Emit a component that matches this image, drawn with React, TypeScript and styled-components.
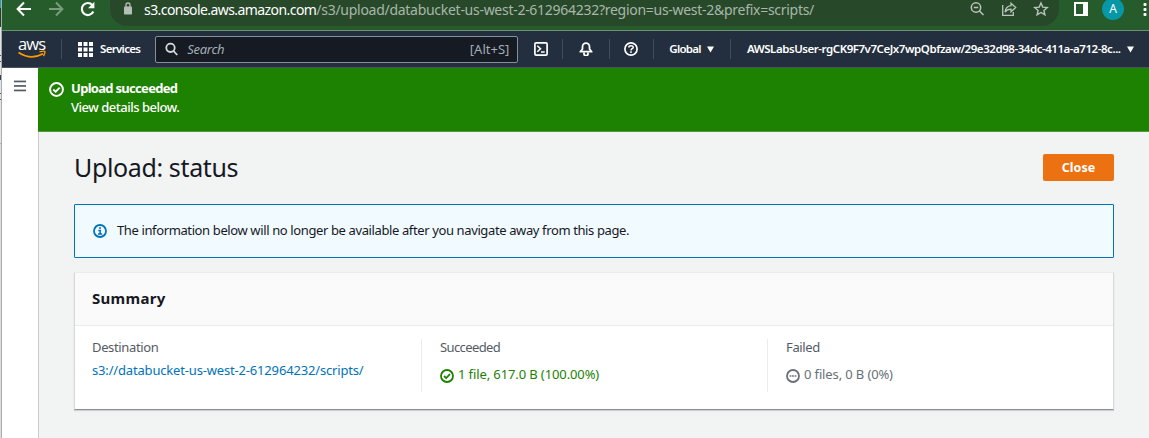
import React from "react";
import styled, { createGlobalStyle } from "styled-components";

const Global = createGlobalStyle`
  *, *::before, *::after { box-sizing: border-box; }
  body { margin: 0; background: #f2f3f3; overflow: hidden; }
  svg { display: block; flex: none; }
`;

const Screen = styled.div`
  display: flex;
  width: 1149px;
  height: 438px;
  overflow: hidden;
  font-family: "Noto Sans", "Open Sans", sans-serif;
  font-size: 13px;
  color: #16191f;
`;

const WindowEdge = styled.div`
  flex: none;
  width: 2px;
  border-right: 1px solid #a9abad;
  background: linear-gradient(
    #1f9fae 0 8px, #20402a 8px 27px, #e3e4e5 27px 55px, #55585c 55px 56px,
    #e3e4e5 56px 61px, #55585c 61px 62px, #e3e4e5 62px 75px, #3c4046 75px 80px,
    #e3e4e5 80px 93px, #55585c 93px 94px, #e3e4e5 94px 99px, #55585c 99px 100px,
    #e3e4e5 100px 143px, #b5b7b9 143px 144px, #dcddde 144px
  );
`;

const Window = styled.div`
  flex: 1;
  display: flex;
  flex-direction: column;
  min-width: 0;
`;

const BrowserBar = styled.div`
  display: flex;
  height: 31px;
  background: #265c2b;
  border-bottom: 1px solid #6d916f;
  color: #fff;
`;

const BrowserButtons = styled.div`
  display: flex;
  flex: none;
  width: 108px;
  padding-left: 14px;
  gap: 14px;
`;

const AddressBar = styled.div`
  display: flex;
  flex: none;
  width: 949px;
  height: 26px;
  padding: 0 10px 0 14px;
  background: #27492a;
  border-radius: 0 0 17px 17px;
`;

const Url = styled.span`
  flex: 1;
  padding-left: 12px;
  font-size: 14px;
  line-height: 19px;
  letter-spacing: -0.28px;
  white-space: nowrap;
  color: #a8b7a9;
`;

const UrlHost = styled.span`
  color: #fff;
  letter-spacing: -0.57px;
`;

const AddressActions = styled.div`
  display: flex;
  gap: 16px;
`;

const BrowserTools = styled.div`
  display: flex;
  flex: 1;
  padding-left: 14px;
`;

const Avatar = styled.div`
  width: 22px;
  height: 22px;
  margin: -2px 19px 0 14px;
  border-radius: 50%;
  background: #0797a7;
  font-size: 12px;
  line-height: 22px;
  text-align: center;
`;

const Nav = styled.nav`
  display: flex;
  align-items: center;
  height: 37px;
  background: #232f3e;
  border-bottom: 1px solid #4a5360;
  color: #fff;
`;

const Logo = styled.div`
  display: flex;
  flex-direction: column;
  width: 42px;
  padding: 0 0 3px 16px;
  font-family: "Open Sans", sans-serif;
  font-size: 16.5px;
  font-weight: 500;
  line-height: 16px;
  letter-spacing: -0.8px;
`;

const Smile = styled.svg`
  margin-top: -2px;
  margin-left: -1px;
`;

const NavDivider = styled.div<{ $before: number; $after: number }>`
  flex: none;
  width: 1px;
  height: 20px;
  margin-left: ${(p) => p.$before}px;
  margin-right: ${(p) => p.$after}px;
  background: #414d5c;
`;

const NavText = styled.span<{ $spacing: number; $gap?: number }>`
  margin-left: ${(p) => p.$gap ?? 0}px;
  margin-right: 6px;
  font-size: 11.5px;
  font-weight: 600;
  line-height: 18px;
  letter-spacing: ${(p) => p.$spacing}px;
  white-space: nowrap;
`;

const SearchBox = styled.div`
  display: flex;
  align-items: center;
  flex: none;
  width: 363px;
  height: 27px;
  margin-left: 9px;
  margin-right: 16px;
  padding: 0 8px 0 9px;
  background: #161a22;
  border: 1px solid #858f99;
  border-radius: 2px;
`;

const SearchHint = styled.span`
  flex: 1;
  padding-left: 9px;
  font-style: italic;
  letter-spacing: -0.3px;
  color: #a3aeb5;
`;

const Shortcut = styled.span`
  font-size: 13px;
  color: #a3aeb5;
`;

const Body = styled.div`
  display: flex;
  flex: 1;
`;

const SideRail = styled.aside`
  flex: none;
  width: 37px;
  padding: 12px 0 0 12px;
  background: #fff;
`;

const Main = styled.main`
  flex: 1;
  margin-left: -1px;
  background: #f2f3f3;
  border-left: 1px solid #c9cdcf;
`;

const Flash = styled.div`
  display: flex;
  height: 64px;
  margin-left: -1px;
  padding: 14px 11px;
  gap: 7px;
  background: #1d8102;
  border-bottom: 1px solid #4f9a3c;
  color: #fff;
`;

const FlashText = styled.div<{ $bold?: boolean; $spacing: number }>`
  font-size: 13px;
  font-weight: ${(p) => (p.$bold ? 700 : 500)};
  line-height: 19px;
  letter-spacing: ${(p) => p.$spacing}px;
  margin-top: ${(p) => (p.$bold ? -3 : 0)}px;
`;

const Content = styled.div`
  padding: 21px 35px 0;
`;

const TitleRow = styled.div`
  display: flex;
  align-items: flex-start;
  justify-content: space-between;
  height: 51px;
`;

const Title = styled.h1`
  margin: -4px 0 0;
  font-size: 25px;
  font-weight: 400;
  line-height: 36px;
  letter-spacing: -0.37px;
`;

const CloseButton = styled.button`
  width: 71px;
  height: 27px;
  margin-top: 1px;
  padding: 0;
  border: 0;
  border-radius: 2px;
  background: #ec7211;
  color: #fff;
  font-family: inherit;
  font-size: 12.5px;
  font-weight: 700;
  line-height: 27px;
`;

const InfoBox = styled.div`
  display: flex;
  align-items: center;
  height: 54px;
  padding-left: 18px;
  gap: 10px;
  background: #f1faff;
  border: 1px solid #0073bb;
  border-radius: 1px;
  color: #0073bb;
  white-space: nowrap;
`;

const InfoText = styled.span`
  margin-top: -2px;
  color: #16191f;
  line-height: 20px;
  letter-spacing: -0.38px;
`;

const Card = styled.section`
  height: 138px;
  margin-top: 14px;
  background: #fff;
  border: 1px solid #d5d9db;
  border-top-color: #eaeded;
  border-bottom-color: #879196;
  box-shadow: 0 1px 1px rgba(0, 28, 36, 0.15);
`;

const CardHeader = styled.h2`
  height: 53px;
  margin: 0;
  padding: 14px 17px 0;
  background: #fafafa;
  border-bottom: 1px solid #eaeded;
  font-size: 15px;
  font-weight: 700;
  line-height: 22px;
  letter-spacing: 0.3px;
`;

const Columns = styled.div`
  display: grid;
  grid-template-columns: 346px 346px 1fr;
  height: 53px;
  margin-top: 13px;
`;

const Column = styled.div<{ $divided?: boolean }>`
  padding-left: ${(p) => (p.$divided ? 18 : 17)}px;
  border-left: ${(p) => (p.$divided ? "1px solid #eaeded" : "0")};
`;

const Label = styled.div<{ $spacing: number }>`
  margin-top: -1px;
  color: #545b64;
  line-height: 18px;
  letter-spacing: ${(p) => p.$spacing}px;
`;

const Value = styled.div<{ $color: string; $spacing: number; $top: number }>`
  display: flex;
  align-items: center;
  margin-top: ${(p) => p.$top}px;
  gap: 4px;
  line-height: 18px;
  color: ${(p) => p.$color};
  letter-spacing: ${(p) => p.$spacing}px;
  white-space: nowrap;

  svg { margin-top: 3px; }
`;

const StatusIcon = ({ kind, size = 14 }: { kind: "check" | "info" | "dots"; size?: number }) => (
  <svg width={size} height={size} viewBox="0 0 14 14" fill="none" stroke="currentColor">
    <circle cx="7" cy="7" r="6" strokeWidth="1.8" />
    {kind === "check" && <path d="M4 7l2.2 2.1L10 5.2" strokeWidth="1.8" />}
    {kind === "info" && (
      <path d="M6 3.9h2M5.3 6.5h1.9v3M5 10h4.2" strokeWidth="1.5" />
    )}
    {kind === "dots" && <path d="M3.6 7h1.8M6.1 7h1.8M8.6 7h1.8" strokeWidth="1.6" />}
  </svg>
);

const Caret = () => (
  <svg width="7" height="7" viewBox="0 0 7 7" fill="currentColor">
    <path d="M0 0.5h7L3.5 6.5z" />
  </svg>
);

export default function App() {
  return (
    <Screen>
      <Global />
      <WindowEdge />
      <Window>
        <BrowserBar>
          <BrowserButtons>
            <svg width="16" height="18" viewBox="0 0 16 18" fill="none" stroke="#fff" strokeWidth="2">
              <path d="M15 9H2M8 2.5L1.6 9 8 15.5" />
            </svg>
            <svg width="18" height="18" viewBox="0 0 18 18" fill="none" stroke="#7b9c7d" strokeWidth="2">
              <path d="M3 9h13M10 2.5L16.4 9 10 15.5" />
            </svg>
            <svg width="18" height="18" viewBox="0 0 18 18" fill="none" stroke="#fff" strokeWidth="2.2">
              <path d="M15.3 11.5A6 6 0 1 1 14.3 5" />
              <path d="M16.4 1.8v6.4H10z" fill="#fff" stroke="none" />
            </svg>
          </BrowserButtons>
          <AddressBar>
            <svg width="8" height="18" viewBox="0 0 8 18">
              <rect x="0" y="6.5" width="8" height="8" rx="0.8" fill="#b4bfb5" />
              <path d="M2 7V5a2 2 0 0 1 4 0v2" fill="none" stroke="#b4bfb5" strokeWidth="1.3" />
            </svg>
            <Url>
              <UrlHost>s3.console.aws.amazon.com</UrlHost>
              /s3/upload/databucket-us-west-2-612964232?region=us-west-2&amp;prefix=scripts/
            </Url>
            <AddressActions>
              <svg width="16" height="18" viewBox="0 0 16 18" fill="none" stroke="#bac5bb" strokeWidth="1.5">
                <circle cx="7" cy="7.5" r="4.7" />
                <path d="M10.5 11l4 4M4.8 7.5h4.4" />
              </svg>
              <svg width="16" height="18" viewBox="0 0 16 18" fill="none" stroke="#bac5bb" strokeWidth="1.3">
                <path d="M1.7 5v10.3H12.3V12" />
                <path d="M10 3.2L14.7 7.5 10 11.7V9.2C7.3 9.2 5.4 10 4 12.2 4.5 8.4 6.6 6.1 10 5.7z" />
              </svg>
              <svg width="16" height="18" viewBox="0 0 16 18" fill="none" stroke="#bac5bb" strokeWidth="1.4">
                <path d="M8 3l1.8 4.1 4.5.4-3.4 3 1 4.4L8 12.5l-3.9 2.4 1-4.4-3.4-3 4.5-.4z" />
              </svg>
            </AddressActions>
          </AddressBar>
          <BrowserTools>
            <svg width="15" height="18" viewBox="0 0 15 18">
              <path d="M1 2h14v14H1zM3 4v10h7V4z" fill="#fff" fillRule="evenodd" />
            </svg>
            <Avatar>A</Avatar>
            <svg width="4" height="18" viewBox="0 0 4 18" fill="#fff">
              <rect x="0.5" y="3" width="3" height="3" rx="1" />
              <rect x="0.5" y="8" width="3" height="3" rx="1" />
              <rect x="0.5" y="13" width="3" height="3" rx="1" />
            </svg>
          </BrowserTools>
        </BrowserBar>

        <Nav>
          <Logo>
            aws
            <Smile width="30" height="9" viewBox="0 0 30 9" fill="none" stroke="#f90">
              <path d="M1.5 2.5Q14 10.5 26 3.8" strokeWidth="1.7" />
              <path d="M22.5 1.9q5-1.2 5.4-.3.3 1.4-1.5 4.6" strokeWidth="1.4" />
            </Smile>
          </Logo>
          <NavDivider $before={17} $after={16} />
          <svg width="15" height="15" viewBox="0 0 15 15" fill="#fff">
            {[0, 5.5, 11].map((y) =>
              [0, 5.5, 11].map((x) => <rect key={`${x}-${y}`} x={x} y={y} width="4" height="4" />)
            )}
          </svg>
          <NavText $gap={7} $spacing={-0.68}>Services</NavText>
          <SearchBox>
            <svg width="13" height="14" viewBox="0 0 13 14" fill="none" stroke="#d5dbdb" strokeWidth="1.8">
              <circle cx="5.5" cy="5.8" r="4.2" />
              <path d="M8.5 9l3.8 4" />
            </svg>
            <SearchHint>Search</SearchHint>
            <Shortcut>[Alt+S]</Shortcut>
          </SearchBox>
          <svg width="14" height="14" viewBox="0 0 14 14" fill="none" stroke="#fff" strokeWidth="1.7">
            <rect x="0.9" y="0.9" width="12.2" height="12.2" rx="1.2" />
            <path d="M3.3 3.8L6.5 6.7 3.3 9.7M7 10h3.7" strokeWidth="1.5" />
          </svg>
          <NavDivider $before={14} $after={16} />
          <svg width="14" height="14" viewBox="0 0 14 14" fill="none" stroke="#fff" strokeWidth="1.8">
            <path d="M1.3 9.7L3.5 7V4.7a3.5 3.5 0 0 1 7 0V7l2.2 2.7z" strokeLinejoin="round" />
            <path d="M5 10.5v1.2a1.7 1.7 0 0 0 4 0v-1.2" />
          </svg>
          <NavDivider $before={16} $after={14} />
          <svg width="14" height="14" viewBox="0 0 14 14" fill="none" stroke="#fff">
            <circle cx="7" cy="7" r="6.1" strokeWidth="1.7" />
            <path d="M4.8 5.5C4.9 3.3 9.2 3.3 9.2 5.4 9.2 6.8 7 6.7 7 8.5M7 9.3v1.6" strokeWidth="1.5" />
          </svg>
          <NavDivider $before={15} $after={15} />
          <NavText $spacing={-0.72}>Global</NavText>
          <Caret />
          <NavDivider $before={16} $after={16} />
          <NavText $spacing={-0.45}>AWSLabsUser-rgCK9F7v7CeJx7wpQbfzaw/29e32d98-34dc-411a-a712-8c...</NavText>
          <Caret />
        </Nav>

        <Body>
          <SideRail>
            <svg width="14" height="12" viewBox="0 0 14 12" fill="#545b64">
              <rect y="0.6" width="12" height="1.7" />
              <rect y="5.1" width="12" height="1.7" />
              <rect y="9.6" width="12" height="1.7" />
            </svg>
          </SideRail>
          <Main>
            <Flash>
              <StatusIcon kind="check" size={15} />
              <div>
                <FlashText $bold $spacing={-0.7}>Upload succeeded</FlashText>
                <FlashText $spacing={-0.48}>View details below.</FlashText>
              </div>
            </Flash>
            <Content>
              <TitleRow>
                <Title>Upload: status</Title>
                <CloseButton>Close</CloseButton>
              </TitleRow>
              <InfoBox>
                <StatusIcon kind="info" />
                <InfoText>The information below will no longer be available after you navigate away from this page.</InfoText>
              </InfoBox>
              <Card>
                <CardHeader>Summary</CardHeader>
                <Columns>
                  <Column>
                    <Label $spacing={-0.35}>Destination</Label>
                    <Value $color="#0073bb" $spacing={-0.17} $top={5}>
                      s3://databucket-us-west-2-612964232/scripts/
                    </Value>
                  </Column>
                  <Column $divided>
                    <Label $spacing={-0.6}>Succeeded</Label>
                    <Value $color="#1d8102" $spacing={-0.11} $top={9}>
                      <StatusIcon kind="check" />
                      1 file, 617.0 B (100.00%)
                    </Value>
                  </Column>
                  <Column $divided>
                    <Label $spacing={-0.35}>Failed</Label>
                    <Value $color="#687078" $spacing={-0.13} $top={9}>
                      <StatusIcon kind="dots" />
                      0 files, 0 B (0%)
                    </Value>
                  </Column>
                </Columns>
              </Card>
            </Content>
          </Main>
        </Body>
      </Window>
    </Screen>
  );
}
